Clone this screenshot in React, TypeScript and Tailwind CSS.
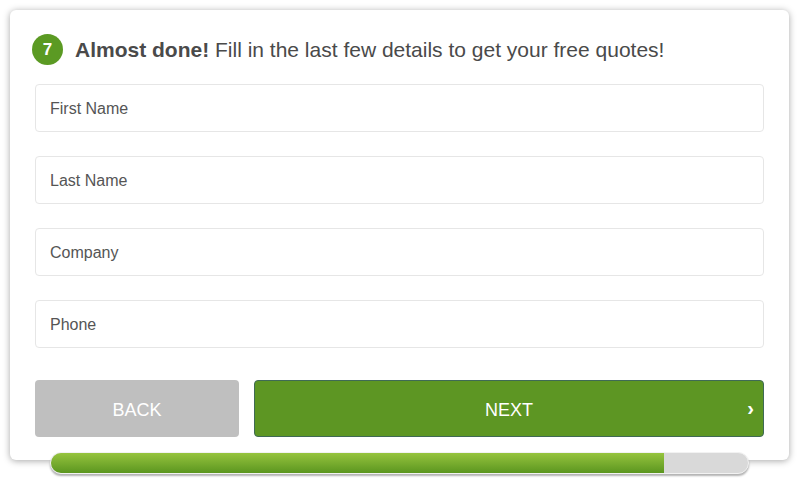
import React from "react";

const fields = ["First Name", "Last Name", "Company", "Phone"];

export default function App() {
  return (
    <div
      className="w-[800px] h-[485px] bg-white pt-[10px] px-[10px]"
      style={{ fontFamily: '"Liberation Sans", Arial, sans-serif' }}
    >
      <div className="relative z-0 w-[779px] h-[450px] bg-white rounded-[6px] shadow-[0_1px_7px_rgba(0,0,0,0.35)] px-[25px] pt-[22px]">
        <div className="flex items-center h-[30px] mb-[22px]">
          <div className="w-[31px] h-[31px] mt-[4px] pt-[2px] rounded-full bg-[#5b9a23] text-white font-bold text-[17px] flex items-center justify-center ml-[-3px]">
            7
          </div>
          <div className="ml-[12px] pt-[4px] text-[21px] text-[#4a4a4a] leading-none">
            <span className="font-bold">Almost done!</span> Fill in the last few details to get your free quotes!
          </div>
        </div>
        <div className="flex flex-col gap-[24px]">
          {fields.map((f) => (
            <div
              key={f}
              className="h-[48px] w-[729px] border border-[#e6e6e6] rounded-[4px] flex items-center pl-[14px] pt-[2px] text-[16px] text-[#555]"
            >
              {f}
            </div>
          ))}
        </div>
        <div className="flex gap-[15px] mt-[32px]">
          <div className="w-[204px] h-[57px] rounded-[4px] bg-[#bfbfbf] text-white text-[18px] flex items-center justify-center pt-[3px]">
            BACK
          </div>
          <div className="relative w-[510px] h-[57px] rounded-[4px] bg-[#5d9623] border border-[#3f6a55] text-white text-[18px] flex items-center justify-center pt-[3px]">
            NEXT
            <span className="absolute right-[9px] inset-y-0 flex items-center text-[20px] font-bold pb-[2px]">›</span>
          </div>
        </div>
      </div>
      <div className="relative z-10 ml-[40px] mt-[-8px] w-[699px] h-[22px] rounded-full border border-[#f2f2f2] bg-[#d9d9d9] shadow-[0_2px_2px_rgba(0,0,0,0.3)] overflow-hidden flex">
        <div className="w-[613px] h-full bg-gradient-to-b from-[#96c43e] to-[#5b961f]" />
      </div>
    </div>
  );
}
